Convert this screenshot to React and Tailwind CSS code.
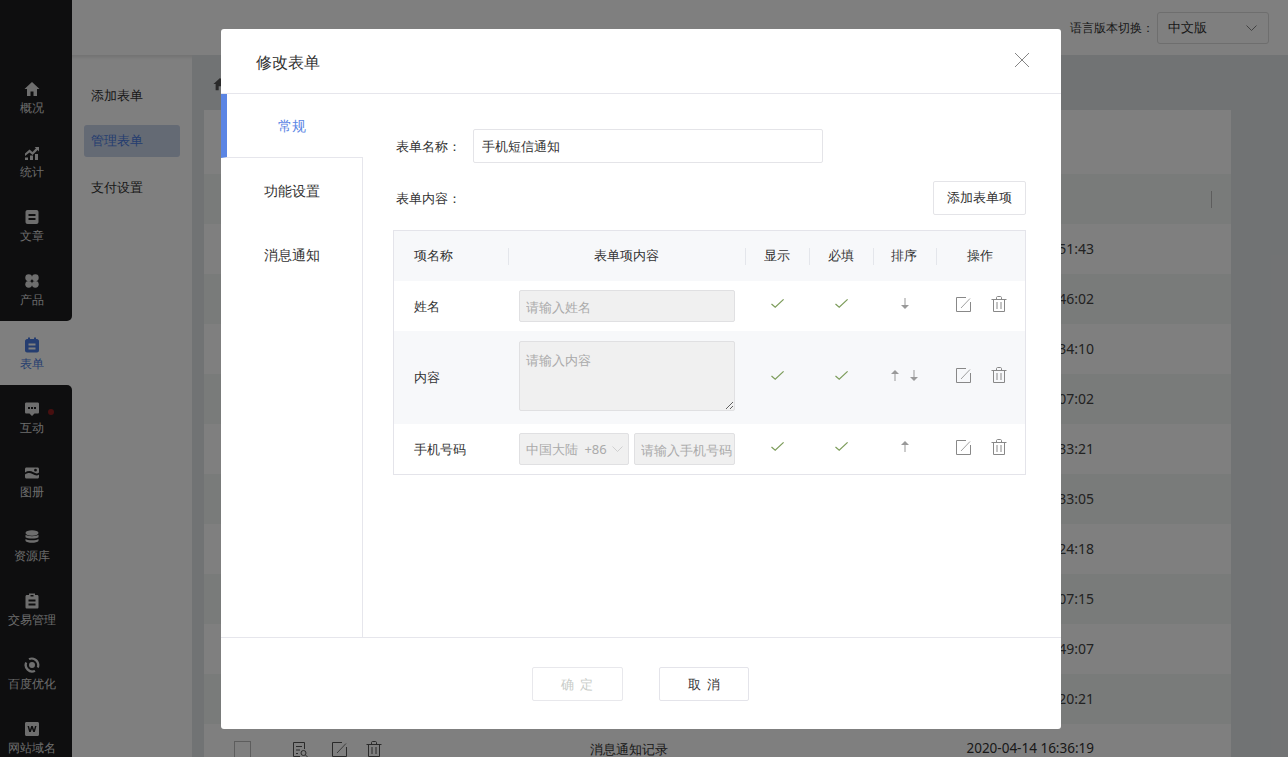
import React from "react";

const Check = () => (
  <svg width="13" height="9" viewBox="0 0 13 9" fill="none" className="mb-[5px]"><path d="M0.5 5L4.2 8.2L12.6 0.4" stroke="#7c9c5a" strokeWidth="1.2" /></svg>
);
const Down = () => (
  <svg width="8" height="11" viewBox="0 0 8 11"><path d="M4 0V8" stroke="#999" strokeWidth="1" /><path d="M0 7H8L4 11Z" fill="#999" /></svg>
);
const Up = () => (
  <svg width="8" height="11" viewBox="0 0 8 11"><path d="M4 3V11" stroke="#999" strokeWidth="1" /><path d="M0 4H8L4 0Z" fill="#999" /></svg>
);
const Edit = ({ c = "#888" }) => (
  <svg width="16" height="16" viewBox="0 0 16 16" fill="none" stroke={c}><path d="M11 1.5H1.5V15.5H15.5V6" /><path d="M6 12L15 2.5" strokeWidth="0.8" /></svg>
);
const Trash = ({ c = "#888" }) => (
  <svg width="16" height="16" viewBox="0 0 16 16" fill="none" stroke={c}><path d="M5.5 3V1.5C5.5 1 6 .5 6.5 .5H9.5C10 .5 10.5 1 10.5 1.5V3" /><path d="M.5 3.5H15.5" /><path d="M2.5 3.5V15.5H13.5V3.5" /><path d="M6 6V13M10 6V13" /></svg>
);
const Chevron = ({ c = "#777", w = 11, h = 6 }) => (
  <svg width={w} height={h} viewBox="0 0 11 6" fill="none"><path d="M.5 .5L5.5 5.5L10.5 .5" stroke={c} strokeWidth="0.9" /></svg>
);

const I = {
  home: <path d="M8 1L0.5 8H3V15H6.5V10.5H9.5V15H13V8H15.5Z" />,
  chart: <><path d="M1 8.5L5.5 4.5L8.5 7L12 3.2L10.6 2H15V6.5L13.6 5L8.6 10L5.5 7.5L1 11Z" /><path d="M1 12.5H4V15H1ZM6 10.5H9V15H6ZM11 9H14V15H11Z" /></>,
  doc: <path fillRule="evenodd" d="M3.5 1H12.5C13.6 1 14.5 1.9 14.5 3V13C14.5 14.1 13.6 15 12.5 15H3.5C2.4 15 1.5 14.1 1.5 13V3C1.5 1.9 2.4 1 3.5 1ZM4.5 5V7H11.5V5ZM4.5 9V11H11.5V9Z" />,
  dots: <><circle cx="4.7" cy="4.7" r="3.4" /><circle cx="11.3" cy="4.7" r="3.4" /><circle cx="4.7" cy="11.3" r="3.4" /><circle cx="11.3" cy="11.3" r="3.4" /></>,
  form: <path fillRule="evenodd" d="M4 .5H6V2H10V.5H12V2H13C14 2 15 3 15 4V13.5C15 14.5 14 15.5 13 15.5H3C2 15.5 1 14.5 1 13.5V4C1 3 2 2 3 2H4ZM4.5 6.5V8.5H11.5V6.5ZM4.5 10.5V12.5H11.5V10.5Z" />,
  chat: <path fillRule="evenodd" d="M2.5 1.5H13.5C14.5 1.5 15 2 15 3V11C15 12 14.5 12.5 13.5 12.5H10.5L8 15L5.5 12.5H2.5C1.5 12.5 1 12 1 11V3C1 2 1.5 1.5 2.5 1.5ZM4 6V8H6V6ZM7 6V8H9V6ZM10 6V8H12V6Z" />,
  image: <path fillRule="evenodd" d="M2.5 2.5H13.5C14.4 2.5 15 3.1 15 4V7.5C13.5 9 11.5 8.6 9.5 7.3C6.5 5.5 3.5 5.8 1 7.5V4C1 3.1 1.6 2.5 2.5 2.5ZM11.5 3.8A1.4 1.4 0 1 0 11.5 6.6A1.4 1.4 0 1 0 11.5 3.8ZM1 9.5C3.5 7.5 6 7.5 8.5 9C11 10.6 13.3 11 15 9.6V12C15 12.9 14.4 13.5 13.5 13.5H2.5C1.6 13.5 1 12.9 1 12Z" />,
  db: <><ellipse cx="8" cy="4" rx="6.5" ry="2.7" /><path d="M1.5 5.8C3 7.6 13 7.6 14.5 5.8V8.2C13 10 3 10 1.5 8.2Z" /><path d="M1.5 10C3 11.8 13 11.8 14.5 10V12C13 14.4 3 14.4 1.5 12Z" /></>,
  clip: <path fillRule="evenodd" d="M5 .5H11V2H13C14 2 14.5 2.6 14.5 3.5V14C14.5 15 14 15.5 13 15.5H3C2 15.5 1.5 15 1.5 14V3.5C1.5 2.6 2 2 3 2H5ZM6.5 2V3.5H9.5V2ZM4.5 6.5V8.5H11.5V6.5ZM4.5 10.5V12.5H11.5V10.5Z" />,
  seo: <path fillRule="evenodd" d="M8 5A3 3 0 1 0 8 11A3 3 0 1 0 8 5ZM8 .5A7.5 7.5 0 0 1 14.8 11L12.8 10A5.5 5.5 0 0 0 5.5 3.1L4.5 1.3A7.5 7.5 0 0 1 8 .5ZM1.2 5L3.2 6A5.5 5.5 0 0 0 10.5 12.9L11.5 14.7A7.5 7.5 0 0 1 1.2 5Z" />,
  w: <path fillRule="evenodd" d="M2.5 1H13.5C14.4 1 15 1.6 15 2.5V13.5C15 14.4 14.4 15 13.5 15H2.5C1.6 15 1 14.4 1 13.5V2.5C1 1.6 1.6 1 2.5 1ZM3.5 5L5.2 11H6.8L8 7.4L9.2 11H10.8L12.5 5H11L10 8.8L8.8 5H7.2L6 8.8L5 5Z" />,
};

const NavItem = ({ icon, label, active, dot }) => (
  <div className={`relative flex h-16 shrink-0 flex-col items-center pr-2 pt-4 ${active ? "text-[#4a7be0]" : "text-[#d8d8d8]"}`}>
    <svg width="16" height="16" viewBox="0 0 16 16" fill="currentColor" className={active ? "" : "text-[#dcdcdc]"}>{I[icon]}</svg>
    <span className="mt-[3px] text-xs leading-4 whitespace-nowrap">{label}</span>
    {dot && <span className="absolute left-[48px] top-[24px] h-[6px] w-[6px] rounded-full bg-[#8f1f1f]" />}
  </div>
);

const times = ["51:43", "46:02", "34:10", "07:02", "33:21", "33:05", "24:18", "07:15", "49:07", "20:21"];

const Th = ({ children, first }) => (
  <div className={first ? "pl-5 text-[#333]" : "flex h-[17px] items-center justify-center border-l border-[#e4e6eb] pr-[2px] text-[#333]"}>{children}</div>
);

const Ops = ({ children }) => (
  <>
    <div className="flex justify-center"><Check /></div>
    <div className="flex justify-center"><Check /></div>
    <div className="mb-[5px] flex justify-center gap-[11px]">{children}</div>
    <div className="mb-[5px] flex justify-center gap-5">
      <Edit />
      <Trash />
    </div>
  </>
);

const grid = "grid grid-cols-[114px_237px_64px_64px_63px_89px] items-center";
const dis = "rounded-[2px] border border-[#e0e0e2] bg-[#f0f0f0] pl-[6px] text-[13px] outline-none placeholder:text-[#aaa]";

export default function App() {
  return (
    <div className="relative flex h-screen flex-col overflow-hidden bg-white text-[13px] text-[#333] [font-family:'Noto_Sans_CJK_SC','Noto_Sans',sans-serif]">
      <div className="flex h-[55px] shrink-0 items-center justify-end pr-[19px] shadow-[0_2px_4px_rgba(0,0,0,0.12)]">
        <span className="mr-[3px] pt-px text-xs">语言版本切换：</span>
        <div className="flex h-8 w-[112px] items-center justify-between rounded-[3px] border border-[#dcdcdc] pl-[10px] pr-[11px]">
          <span className="pt-px">中文版</span>
          <Chevron />
        </div>
      </div>
      <div className="flex min-h-0 flex-1 -mt-[55px]">
        <div className="flex w-[72px] shrink-0 flex-col">
          <div className="shrink-0 rounded-br-[5px] bg-[#1c1c1e] pt-[65px]">
            <NavItem icon="home" label="概况" />
            <NavItem icon="chart" label="统计" />
            <NavItem icon="doc" label="文章" />
            <NavItem icon="dots" label="产品" />
          </div>
          <NavItem icon="form" label="表单" active />
          <div className="flex-1 shrink-0 rounded-tr-[5px] bg-[#1c1c1e]">
            <NavItem icon="chat" label="互动" dot />
            <NavItem icon="image" label="图册" />
            <NavItem icon="db" label="资源库" />
            <NavItem icon="clip" label="交易管理" />
            <NavItem icon="seo" label="百度优化" />
            <NavItem icon="w" label="网站域名" />
          </div>
        </div>
        <div className="flex flex-1 flex-col pt-[55px]">
          <div className="flex min-h-0 flex-1">
            <div className="w-[120px] shrink-0 px-3 pt-[21px]">
              <div className="flex h-[40px] items-center pl-[7px]">添加表单</div>
              <div className="mt-[9px] flex h-8 items-center rounded-[3px] bg-[#c9d4e8] pl-[7px] text-[#4a7be0]">管理表单</div>
              <div className="mt-[11px] flex h-[40px] items-center pl-[7px]">支付设置</div>
            </div>
            <div className="flex-1 overflow-hidden bg-[#e3e6e8] pl-3 pr-[57px]">
              <div className="flex h-[55px] items-start pl-[9px] pt-[22px]">
                <svg width="14" height="14" viewBox="0 0 16 16" fill="#555">{I.home}</svg>
              </div>
              <div className="bg-white pt-16">
                <div className="flex h-[50px] items-center justify-end bg-[#f3f6f5] pr-[19px]">
                  <span className="h-[17px] border-l border-[#bbb]" />
                </div>
                {times.map((t, i) => (
                  <div key={t} className={`flex h-[50px] items-center justify-end pr-[137px] text-sm text-[#444] ${i % 2 ? "bg-[#f3f6f5]" : "bg-white"}`}>{t}</div>
                ))}
                <div className="flex h-[50px] items-center pl-[30px] pr-[137px] text-sm text-[#333]">
                  <span className="h-[17px] w-[17px] border border-[#bbb]" />
                  <span className="ml-[41px] flex gap-[22px]">
                    <svg width="17" height="17" viewBox="0 0 17 17" fill="none" stroke="#555"><path d="M8 15.5H1.5V1.5H12.5V8" /><path d="M4 5.5H10M4 9H8M4 12.5H6" /><circle cx="11.5" cy="12" r="2.5" /><path d="M13.5 14L16 16.5" /></svg>
                    <Edit c="#555" />
                    <span className="ml-[-3px]"><Trash c="#555" /></span>
                  </span>
                  <span className="ml-[208px] text-[13px]">消息通知记录</span>
                  <span className="ml-auto text-[13.5px]">2020-04-14 16:36:19</span>
                </div>
              </div>
            </div>
          </div>
        </div>
      </div>

      <div className="absolute inset-0 bg-black/50" />

      <div className="absolute left-[221px] top-[29px] flex h-[700px] w-[840px] flex-col rounded-[3px] bg-white">
        <div className="flex h-[65px] shrink-0 items-center justify-between border-b border-[#e6e6ec] pl-[35px] pr-[32px]">
          <span className="pt-[2px] text-base leading-none text-[#333]">修改表单</span>
          <svg width="14" height="14" viewBox="0 0 14 14" fill="none" className="-mt-[2px]"><path d="M0 0L14 14M14 0L0 14" stroke="#777" strokeWidth="0.9" /></svg>
        </div>
        <div className="flex min-h-0 flex-1">
          <div className="flex w-[142px] shrink-0 flex-col text-sm">
            <div className="flex h-16 items-center justify-center border-b border-l-[6px] border-b-[#e6e6ec] border-l-[#5b85e4] pr-[6px] text-[#5b85e4]">常规</div>
            <div className="flex-1 border-r border-[#e6e6ec]">
              <div className="flex h-16 items-center justify-center pt-[2px]">功能设置</div>
              <div className="flex h-16 items-center justify-center pt-[2px]">消息通知</div>
            </div>
          </div>
          <div className="flex-1 pl-[30px] pr-[35px] pt-[35px]">
            <div className="flex h-[34px] items-center">
              <span className="ml-[3px] w-[77px] pt-px">表单名称：</span>
              <input readOnly value="手机短信通知" className="h-[34px] w-[350px] rounded-[2px] border border-[#e4e4e8] px-2 pt-px text-[13px] text-[#333] outline-none" />
            </div>
            <div className="mt-[18px] flex h-[34px] items-center justify-between">
              <span className="ml-[3px] pt-px">表单内容：</span>
              <button className="h-[34px] w-[93px] rounded-[2px] border border-[#e4e4e8] bg-white text-[13px] text-[#333]">添加表单项</button>
            </div>
            <div className="mt-[15px] border border-[#e4e4ea]">
              <div className={`${grid} h-[50px] bg-[#f7f8fa] text-center`}>
                <Th first><div className="text-left">项名称</div></Th>
                <Th>表单项内容</Th>
                <Th>显示</Th>
                <Th>必填</Th>
                <Th>排序</Th>
                <Th>操作</Th>
              </div>
              <div className={`${grid} h-[50px]`}>
                <div className="pl-5 pt-px">姓名</div>
                <div className="pl-[11px]"><input disabled placeholder="请输入姓名" className={`${dis} block h-8 w-[216px] pt-[2px]`} /></div>
                <Ops><Down /></Ops>
              </div>
              <div className={`${grid} h-[93px] bg-[#f7f8fa]`}>
                <div className="pl-5 pt-px">内容</div>
                <div className="self-start pl-[11px] pt-[10px]"><textarea readOnly placeholder="请输入内容" className={`${dis} block h-[70px] w-[216px] resize-y pt-[8px] leading-5`} /></div>
                <Ops><Up /><Down /></Ops>
              </div>
              <div className={`${grid} h-[50px]`}>
                <div className="pl-5 pt-px">手机号码</div>
                <div className="flex gap-[5px] pl-[11px]">
                  <div className="flex h-8 w-[110px] items-center justify-between rounded-[2px] border border-[#e0e0e2] bg-[#f0f0f0] pl-[6px] pr-[5px] text-[#aaa]">
                    <span className="whitespace-nowrap pt-px [word-spacing:3px]">中国大陆 +86</span>
                    <Chevron c="#ccc" />
                  </div>
                  <input disabled placeholder="请输入手机号码" className={`${dis} block h-8 w-[101px] pt-[2px]`} />
                </div>
                <Ops><Up /></Ops>
              </div>
            </div>
          </div>
        </div>
        <div className="flex h-[92px] shrink-0 justify-center gap-[36px] border-t border-[#e6e6ec] pr-[1px] pt-[29px]">
          <button className="h-[34px] w-[91px] rounded-[2px] border border-[#e8e8ec] pr-px pt-px text-[13px] text-[#c8ccc8] [word-spacing:3px]">确 定</button>
          <button className="h-[34px] w-[90px] rounded-[2px] border border-[#e4e4ea] pt-px text-[13px] text-[#333] [word-spacing:3px]">取 消</button>
        </div>
      </div>
    </div>
  );
}
